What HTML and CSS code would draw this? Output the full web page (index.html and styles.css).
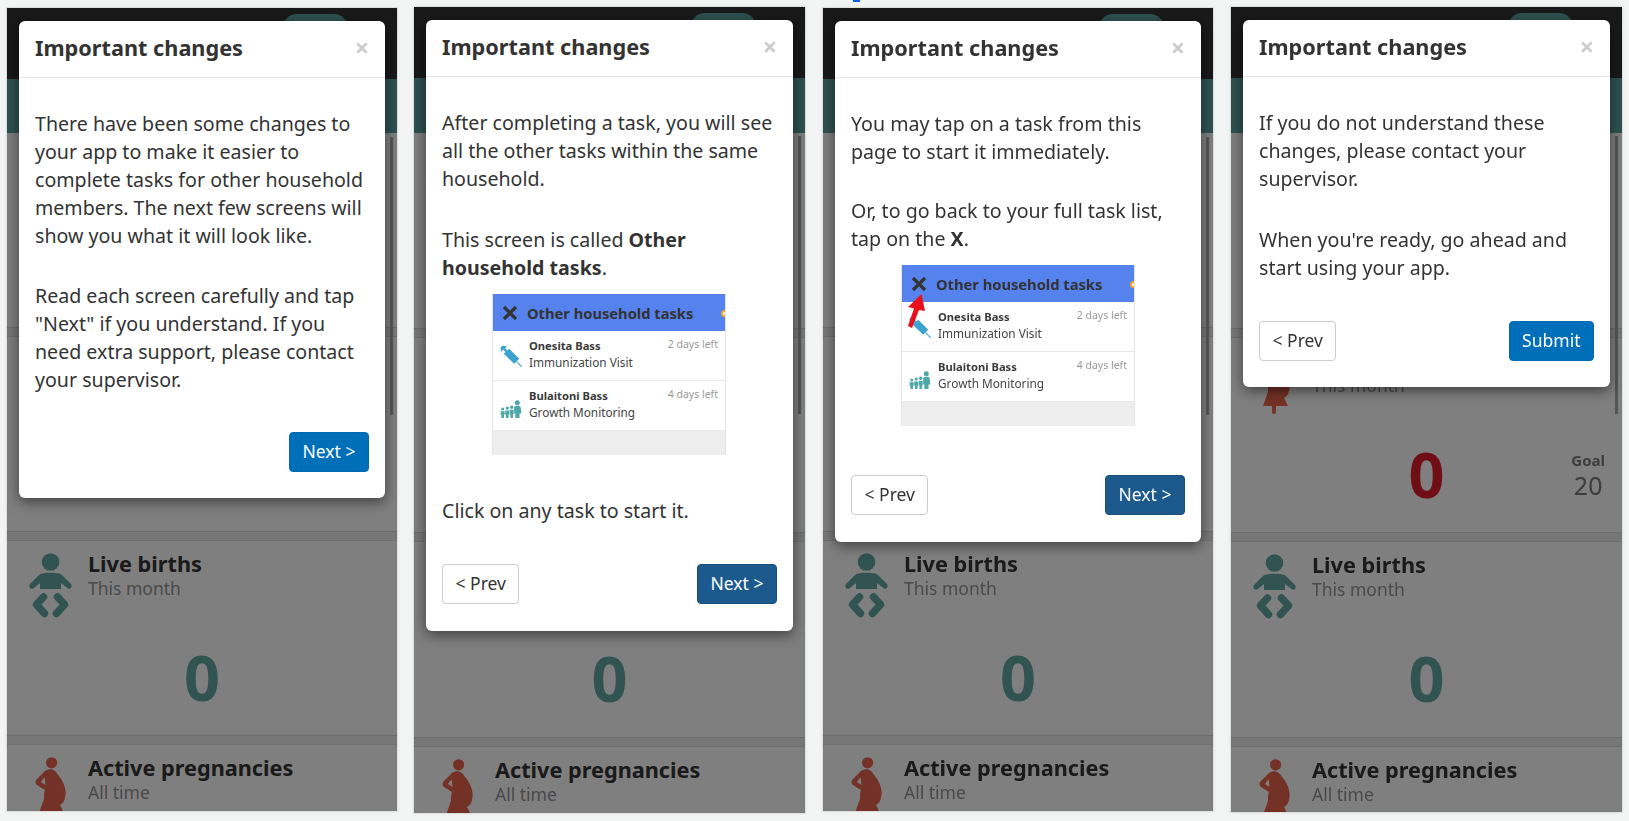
FILE: index.html
```html
<!DOCTYPE html>
<html lang="en">
<head>
<meta charset="utf-8">
<title>Important changes</title>
<link rel="stylesheet" href="styles.css">
</head>
<body>
<svg class="defs" aria-hidden="true">
  <symbol id="baby" viewBox="0 0 44 65">
    <circle cx="21.500" cy="9" r="8.800"/>
    <path d="M13 20.500 C17 19.500 26 19.500 30 20.500 C32 21 33 22 34 23 L42 31 C44 34 41 37 38.500 35 L32 30 L32 36 L11 36 L11 30 L5 35 C2 37 -1 34 1 31 L9 23 C10 22 11 21 13 20.500 Z"/>
    <path class="leg" d="M14.500 44 L7.500 51.500 L15.500 60.500"/>
    <path class="leg" d="M28.500 44 L35.500 51.500 L27.500 60.500"/>
  </symbol>
  <symbol id="pregnant" viewBox="0 0 44 65">
    <circle cx="22.600" cy="5.800" r="5.600"/>
    <path fill-rule="evenodd" d="M16 14 C21 11 26 12 29 18 C35 25 38 33 36 41 C35 45 33 47 31 48 L35 56 L23 56 L23 63 Q21 65 19 63 L19 56 L10 56 L15 42 C15 38 15 36 16 33 L8 28 Q5 25 8 22 Z M15.500 20 L12 25 L16.500 28 Z"/>
  </symbol>
  <symbol id="syringe" viewBox="0 0 24 24">
    <path d="M0.500 3 L3 0.500 L7.500 1.500 L5.500 3.500 L8 6 L10 4 L21 15 L15.500 20.500 L4 9.500 L6 7.500 L3.500 5 L1.500 7.500 Z"/>
    <path d="M18 18 L24 24" stroke-width="1.600" stroke="#6db9d8" fill="none"/>
  </symbol>
  <symbol id="family" viewBox="0 0 24 20">
    <circle cx="2.800" cy="10" r="1.700"/>
    <path d="M0.500 12.500 H5 V16.500 H4.200 V20 H1.300 V16.500 H0.500 Z"/>
    <circle cx="7.800" cy="9" r="1.800"/>
    <path d="M5.600 11.700 H10 V16.500 H9.200 V20 H6.400 V16.500 H5.600 Z"/>
    <circle cx="12.800" cy="8" r="1.900"/>
    <path d="M10.600 10.800 H15 V16 H14.200 V20 H11.400 V16 H10.600 Z"/>
    <circle cx="19" cy="3" r="2.800"/>
    <path d="M15.500 8.500 Q15.500 6.500 17.500 6.500 H20.500 Q22.800 6.500 22.800 8.500 L23.500 15 H21.500 V20 H16.800 V15 H15.500 Z"/>
  </symbol>
</svg>

<main class="stage">
  <span class="tick"></span>

  <section class="phone phone-a">
    <div class="app">
      <header class="topbar"><span class="pill"></span></header>
      <div class="tabbar"></div>
      <div class="card"></div>
      <div class="band"></div>
      <div class="card">
        <div class="card-head"><svg class="icon red"><use href="#pregnant"/></svg><div class="card-text"><div class="card-title">&nbsp;</div><div class="card-sub">This month</div></div></div>
        <div class="count-row"><span></span><span class="count red">0</span><div class="goal"><b>Goal</b><span>20</span></div></div>
      </div>
      <div class="band"></div>
      <div class="card">
        <div class="card-head"><svg class="icon teal"><use href="#baby"/></svg><div class="card-text"><div class="card-title">Live births</div><div class="card-sub">This month</div></div></div>
        <div class="count-row"><span></span><span class="count teal">0</span><span></span></div>
      </div>
      <div class="band"></div>
      <div class="card">
        <div class="card-head"><svg class="icon red"><use href="#pregnant"/></svg><div class="card-text"><div class="card-title">Active pregnancies</div><div class="card-sub">All time</div></div></div>
      </div>
    </div>
    <span class="scrollbar"></span>
    <div class="backdrop"></div>
    <div class="modal">
      <div class="modal-head"><h2>Important changes</h2><span class="close">×</span></div>
      <div class="modal-body">
        <p>There have been some changes to your app to make it easier to complete tasks for other household members. The next few screens will show you what it will look like.</p>
        <p>Read each screen carefully and tap "Next" if you understand. If you need extra support, please contact your supervisor.</p>
        <div class="modal-foot end"><button class="btn primary">Next &gt;</button></div>
      </div>
    </div>
  </section>

  <section class="phone phone-b">
    <div class="app">
      <header class="topbar"><span class="pill"></span></header>
      <div class="tabbar"></div>
      <div class="card"></div>
      <div class="band"></div>
      <div class="card">
        <div class="card-head"><svg class="icon red"><use href="#pregnant"/></svg><div class="card-text"><div class="card-title">&nbsp;</div><div class="card-sub">This month</div></div></div>
        <div class="count-row"><span></span><span class="count red">0</span><div class="goal"><b>Goal</b><span>20</span></div></div>
      </div>
      <div class="band"></div>
      <div class="card">
        <div class="card-head"><svg class="icon teal"><use href="#baby"/></svg><div class="card-text"><div class="card-title">Live births</div><div class="card-sub">This month</div></div></div>
        <div class="count-row"><span></span><span class="count teal">0</span><span></span></div>
      </div>
      <div class="band"></div>
      <div class="card">
        <div class="card-head"><svg class="icon red"><use href="#pregnant"/></svg><div class="card-text"><div class="card-title">Active pregnancies</div><div class="card-sub">All time</div></div></div>
      </div>
    </div>
    <span class="scrollbar"></span>
    <div class="backdrop"></div>
    <div class="modal">
      <div class="modal-head"><h2>Important changes</h2><span class="close">×</span></div>
      <div class="modal-body">
        <p>After completing a task, you will see all the other tasks within the same household.</p>
        <p>This screen is called <b>Other household tasks</b>.</p>
        <div class="shot">
          <div class="shot-head"><svg class="shot-x" viewBox="0 0 16 16"><path d="M2 2 L14 14 M14 2 L2 14"/></svg><span>Other household tasks</span><i class="shot-dot"></i></div>
          <div class="shot-row"><svg class="shot-icon syringe"><use href="#syringe"/></svg><div class="shot-text"><b>Onesita Bass</b><span>Immunization Visit</span></div><em>2 days left</em></div>
          <div class="shot-row"><svg class="shot-icon family"><use href="#family"/></svg><div class="shot-text"><b>Bulaitoni Bass</b><span>Growth Monitoring</span></div><em>4 days left</em></div>
          <div class="shot-empty"></div>
        </div>
        <p>Click on any task to start it.</p>
        <div class="modal-foot"><button class="btn">&lt; Prev</button><button class="btn dark">Next &gt;</button></div>
      </div>
    </div>
  </section>

  <section class="phone phone-c">
    <div class="app">
      <header class="topbar"><span class="pill"></span></header>
      <div class="tabbar"></div>
      <div class="card"></div>
      <div class="band"></div>
      <div class="card">
        <div class="card-head"><svg class="icon red"><use href="#pregnant"/></svg><div class="card-text"><div class="card-title">&nbsp;</div><div class="card-sub">This month</div></div></div>
        <div class="count-row"><span></span><span class="count red">0</span><div class="goal"><b>Goal</b><span>20</span></div></div>
      </div>
      <div class="band"></div>
      <div class="card">
        <div class="card-head"><svg class="icon teal"><use href="#baby"/></svg><div class="card-text"><div class="card-title">Live births</div><div class="card-sub">This month</div></div></div>
        <div class="count-row"><span></span><span class="count teal">0</span><span></span></div>
      </div>
      <div class="band"></div>
      <div class="card">
        <div class="card-head"><svg class="icon red"><use href="#pregnant"/></svg><div class="card-text"><div class="card-title">Active pregnancies</div><div class="card-sub">All time</div></div></div>
      </div>
    </div>
    <span class="scrollbar"></span>
    <div class="backdrop"></div>
    <div class="modal">
      <div class="modal-head"><h2>Important changes</h2><span class="close">×</span></div>
      <div class="modal-body">
        <p>You may tap on a task from this page to start it immediately.</p>
        <p>Or, to go back to your full task list, tap on the <b>X</b>.</p>
        <div class="shot">
          <div class="shot-head"><svg class="shot-x" viewBox="0 0 16 16"><path d="M2 2 L14 14 M14 2 L2 14"/></svg><span>Other household tasks</span><i class="shot-dot"></i></div>
          <div class="shot-row"><svg class="shot-icon syringe"><use href="#syringe"/></svg><div class="shot-text"><b>Onesita Bass</b><span>Immunization Visit</span></div><em>2 days left</em></div>
          <div class="shot-row"><svg class="shot-icon family"><use href="#family"/></svg><div class="shot-text"><b>Bulaitoni Bass</b><span>Growth Monitoring</span></div><em>4 days left</em></div>
          <div class="shot-empty"></div>
          <svg class="shot-arrow" viewBox="0 0 30 70"><path d="M19.500 29 L6 42 L12 43.500 L6 61 L10 63 L17 45 L23 46 Z"/></svg>
        </div>
        <div class="modal-foot"><button class="btn">&lt; Prev</button><button class="btn dark">Next &gt;</button></div>
      </div>
    </div>
  </section>

  <section class="phone phone-d">
    <div class="app">
      <header class="topbar"><span class="pill"></span></header>
      <div class="tabbar"></div>
      <div class="card"></div>
      <div class="band"></div>
      <div class="card">
        <div class="card-head"><svg class="icon red"><use href="#pregnant"/></svg><div class="card-text"><div class="card-title">&nbsp;</div><div class="card-sub">This month</div></div></div>
        <div class="count-row"><span></span><span class="count red">0</span><div class="goal"><b>Goal</b><span>20</span></div></div>
      </div>
      <div class="band"></div>
      <div class="card">
        <div class="card-head"><svg class="icon teal"><use href="#baby"/></svg><div class="card-text"><div class="card-title">Live births</div><div class="card-sub">This month</div></div></div>
        <div class="count-row"><span></span><span class="count teal">0</span><span></span></div>
      </div>
      <div class="band"></div>
      <div class="card">
        <div class="card-head"><svg class="icon red"><use href="#pregnant"/></svg><div class="card-text"><div class="card-title">Active pregnancies</div><div class="card-sub">All time</div></div></div>
      </div>
    </div>
    <span class="scrollbar"></span>
    <div class="backdrop"></div>
    <div class="modal">
      <div class="modal-head"><h2>Important changes</h2><span class="close">×</span></div>
      <div class="modal-body">
        <p>If you do not understand these changes, please contact your supervisor.</p>
        <p>When you're ready, go ahead and start using your app.</p>
        <div class="modal-foot"><button class="btn">&lt; Prev</button><button class="btn primary">Submit</button></div>
      </div>
    </div>
  </section>
</main>
</body>
</html>
```
FILE: styles.css
```css
* { box-sizing: border-box; }
html, body { margin: 0; height: 100%; }
body {
  background: #f3f5f4;
  font-family: "Noto Sans", "Open Sans", sans-serif;
  color: #333;
  overflow: hidden;
}
.defs { display: none; }

.stage {
  position: relative;
  display: flex;
  align-items: flex-start;
  gap: 17px;
  padding-left: 7px;
  filter: blur(.35px);
}
.tick {
  position: absolute;
  left: 853px;
  top: 0;
  width: 7px;
  height: 2px;
  background: #0a5fe8;
}

.phone {
  position: relative;
  flex: none;
  overflow: hidden;
  box-shadow: 0 0 0 1px #dcdfde, 0 0 6px rgba(0, 0, 0, .06);
}
.phone-a { width: 390px; height: 803px; margin-top: 8px; }
.phone-b { width: 391px; height: 806px; margin-top: 7px; }
.phone-c { width: 390px; height: 803px; margin-top: 8px; margin-left: 1px; }
.phone-d { width: 391px; height: 805px; margin-top: 7px; margin-left: 1px; }

.app { background: #fff; height: 100%; }
.topbar {
  height: 71px;
  background: #333;
  display: flex;
  justify-content: flex-end;
  align-items: flex-start;
  padding: 6px 49px 0 0;
}
.pill {
  width: 65px;
  height: 30px;
  border-radius: 14px;
  background: #5ca3a2;
}
.tabbar { height: 54px; background: #5ca3a2; }
.phone-b .tabbar, .phone-d .tabbar { height: 55px; }

.card { height: 194px; background: #fff; }
.phone-b .card, .phone-d .card { height: 194.600px; }
.band {
  height: 10px;
  background: #eee;
  border-top: 1px solid #d8d8d8;
  border-bottom: 1px solid #dedede;
}
.card-head {
  display: flex;
  padding: 12px 0 0 22px;
  gap: 15px;
}
.icon { width: 44px; height: 65px; flex: none; }
.icon.teal { fill: #62a8a5; }
.icon.red { fill: #e8624a; }
.leg {
  fill: none;
  stroke: #62a8a5;
  stroke-width: 7.500px;
  stroke-linecap: round;
  stroke-linejoin: round;
}
.card-text { margin-top: -3px; }
.card-title {
  font-size: 21.700px;
  line-height: 27px;
  font-weight: 700;
  color: #343434;
}
.card-sub {
  font-size: 17.500px;
  line-height: 22px;
  color: #949494;
}
.count-row {
  display: grid;
  grid-template-columns: 1fr auto 1fr;
  margin-top: 21px;
  padding-right: 17px;
  padding-left: 17px;
}
.count {
  font-size: 63px;
  line-height: 76px;
  font-weight: 700;
}
.count.teal { color: #62a8a5; }
.count.red { color: #e01c2a; }
.goal {
  justify-self: end;
  margin-top: 13px;
  display: flex;
  flex-direction: column;
  align-items: center;
  color: #7a7a7a;
}
.goal b { font-size: 15px; line-height: 22px; }
.goal span { font-size: 25px; line-height: 28px; font-weight: 400; }

.scrollbar {
  position: absolute;
  top: 129px;
  right: 4px;
  width: 3px;
  height: 278px;
  background: #aaa;
}
.backdrop {
  position: absolute;
  inset: 0;
  background: rgba(0, 0, 0, .5);
}

.modal {
  position: absolute;
  left: 12px;
  right: 12px;
  top: 13px;
  background: #fff;
  border-radius: 6px;
  box-shadow: 0 4px 14px rgba(0, 0, 0, .5);
}
.modal-head {
  height: 57px;
  padding: 0 16px 3px 16px;
  display: flex;
  align-items: center;
  justify-content: space-between;
  border-bottom: 1px solid #e5e5e5;
}
.modal-head h2 {
  margin: 0;
  font-size: 21.700px;
  font-weight: 700;
  color: #333;
}
.close {
  font-size: 25px;
  font-weight: 700;
  line-height: 1;
  color: #ccc;
}
.modal-body {
  display: flex;
  flex-direction: column;
  padding: 32px 16px 26px;
}
.phone-b .modal-body { padding-bottom: 27px; }
.phone-c .modal-body { padding-bottom: 27px; }
.modal-body p {
  margin: 0;
  font-size: 19.600px;
  line-height: 28px;
  color: #333;
}
.modal-body p + p { margin-top: 32px; }
.phone-b .modal-body p + p, .phone-d .modal-body p + p { margin-top: 33px; }
.phone-c .modal-body p + p { margin-top: 31px; }
.modal-body .shot + p { margin-top: 32px; }

.modal-foot {
  display: flex;
  justify-content: space-between;
  margin-top: 39px;
}
.modal-foot.end { justify-content: flex-end; margin-top: 38px; }
.btn {
  height: 40px;
  padding: 0 12.500px 2px;
  font-family: inherit;
  font-size: 17.500px;
  color: #333;
  background: #fff;
  border: 1px solid #ccc;
  border-radius: 4px;
}
.btn.primary { background: #006fba; border-color: #0069b0; color: #fff; }
.btn.dark { background: #1c5a8d; border-color: #184f7c; color: #fff; }

.shot {
  position: relative;
  width: 234px;
  height: 161px;
  margin: 12px 0 10px 50px;
  overflow: hidden;
  border: solid #e4e4e4;
  border-width: 0 1px;
  flex: none;
}
.shot-head {
  height: 37px;
  background: #5682ed;
  display: flex;
  align-items: center;
  gap: 9px;
  padding-left: 9px;
  font-size: 14.700px;
  font-weight: 700;
  color: #333;
  position: relative;
}
.shot-x { width: 16px; height: 16px; flex: none; }
.shot-x path { fill: none; stroke: #333; stroke-width: 3.200px; }
.shot-dot {
  position: absolute;
  right: -3px;
  top: 16px;
  width: 7px;
  height: 7px;
  border-radius: 50%;
  background: #fff;
  border: 2px solid #f5a623;
}
.shot-row {
  height: 50px;
  display: flex;
  align-items: flex-start;
  border-bottom: 1px solid #e9e9e9;
  padding: 6px 7px 0 7px;
  background: #fff;
  position: relative;
}
.shot-icon { width: 22px; height: 22px; flex: none; margin-top: 8px; }
.shot-icon.syringe { fill: #3aa3cf; }
.shot-icon.family { fill: #4fa8a8; width: 22px; height: 18px; margin-top: 13px; }
.shot-text {
  display: flex;
  flex-direction: column;
  margin-left: 7px;
  flex: 1;
  font-size: 11.800px;
  line-height: 17px;
  color: #444;
}
.shot-text b { font-size: 11.200px; color: #3a3a3a; }
.shot-row em {
  font-style: normal;
  font-size: 10.500px;
  line-height: 14px;
  color: #999;
}
.shot-empty { height: 24px; background: #eee; }
.shot-arrow {
  position: absolute;
  left: 0;
  top: 0;
  width: 30px;
  height: 70px;
  fill: #e8101c;
}
```
